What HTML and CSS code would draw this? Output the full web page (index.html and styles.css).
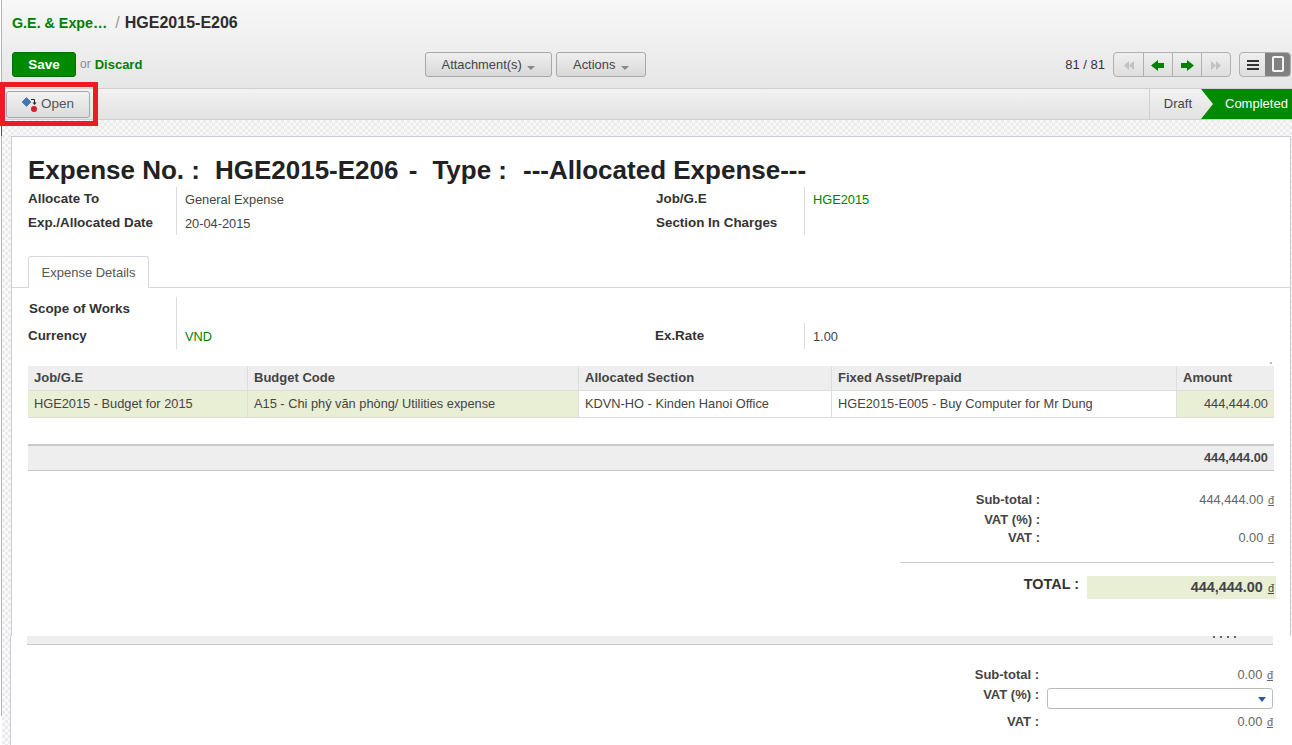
FILE: index.html
```html
<!DOCTYPE html>
<html lang="en">
<head>
  <meta charset="UTF-8">
  <title>HGE2015-E206</title>
  <link rel="stylesheet" href="styles.css">
</head>
<body>
  <div class="app">
    <header class="cp">
      <div class="crumbs">
        <a class="crumb-link">G.E. &amp; Expe…</a>
        <span class="crumb-sep">/</span>
        <span class="crumb-now">HGE2015-E206</span>
      </div>
      <div class="cp-row">
        <div class="cp-left">
          <button class="btn-save">Save</button>
          <span class="or">or</span>
          <a class="discard">Discard</a>
        </div>
        <div class="cp-mid">
          <button class="btn btn-attach">Attachment(s) <i class="caret"></i></button>
          <button class="btn btn-actions">Actions <i class="caret"></i></button>
        </div>
        <div class="cp-right">
          <span class="pager">81 / 81</span>
          <div class="group">
            <button class="seg seg-nav"><svg width="14" height="11" viewBox="0 0 14 11"><path fill="#c2c2c2" d="M7 1v9L2 5.500zM12 1v9L7 5.500z"/></svg></button>
            <button class="seg seg-nav"><svg width="14" height="11" viewBox="0 0 14 11"><path fill="#008000" d="M7 0v3h6v5H7v3L0 5.500z"/></svg></button>
            <button class="seg seg-nav"><svg width="14" height="11" viewBox="0 0 14 11"><path fill="#008000" d="M7 0v3H1v5h6v3l7-5.500z"/></svg></button>
            <button class="seg seg-nav"><svg width="14" height="11" viewBox="0 0 14 11"><path fill="#c2c2c2" d="M2 1v9l5-4.500zM7 1v9l5-4.500z"/></svg></button>
          </div>
          <div class="group group-view">
            <button class="seg seg-view"><svg class="icon-list" width="12" height="10" viewBox="0 0 12 10"><path fill="#333" d="M0 0h12v2H0zM0 4h12v2H0zM0 8h12v2H0z"/></svg></button>
            <button class="seg seg-view seg-on"><svg width="12" height="16" viewBox="0 0 12 16"><rect x="1" y="1" width="10" height="14" rx="1" fill="none" stroke="#f4f4f4" stroke-width="2"/></svg></button>
          </div>
        </div>
      </div>
    </header>

    <div class="statusbar">
      <button class="btn-open">
        <svg width="16" height="16" viewBox="0 0 16 16"><path fill="#3f78b5" stroke="#2c5688" stroke-width=".5" d="M4.500 .5L9 5 4.500 9.500 0 5z"/><path fill="none" stroke="#222" d="M9 2.500h3.500V6"/><path fill="#222" d="M10.500 5.500h4L12.500 8z"/><circle cx="12" cy="12" r="3" fill="#d0202a"/></svg>
        Open
      </button>
      <div class="steps">
        <span class="step">Draft</span>
        <span class="step step-on">Completed</span>
      </div>
    </div>

    <main class="view">
      <section class="sheet">
        <h1 class="title"><span>Expense No. :</span><span>HGE2015-E206 -</span><span>Type :</span><span>---Allocated Expense---</span></h1>
        <div class="fields">
          <div class="field"><b>Allocate To</b><span>General Expense</span></div>
          <div class="field"><b>Job/G.E</b><a>HGE2015</a></div>
          <div class="field"><b>Exp./Allocated Date</b><span>20-04-2015</span></div>
          <div class="field"><b>Section In Charges</b><span></span></div>
        </div>

        <div class="tabs"><span class="tab">Expense Details</span></div>

        <div class="fields fields-tab">
          <div class="field field-scope"><b>Scope of Works</b><span></span></div>
          <div></div>
          <div class="field"><b>Currency</b><a>VND</a></div>
          <div class="field field-rate"><b>Ex.Rate</b><span>1.00</span></div>
        </div>

        <div class="dot"></div>
        <table class="lines">
          <thead>
            <tr><th class="c1">Job/G.E</th><th class="c2">Budget Code</th><th class="c3">Allocated Section</th><th class="c4">Fixed Asset/Prepaid</th><th>Amount</th></tr>
          </thead>
          <tbody>
            <tr>
              <td class="hl">HGE2015 - Budget for 2015</td>
              <td class="hl">A15 - Chi phý văn phòng/ Utilities expense</td>
              <td>KDVN-HO - Kinden Hanoi Office</td>
              <td>HGE2015-E005 - Buy Computer for Mr Dung</td>
              <td class="hl num">444,444.00</td>
            </tr>
          </tbody>
        </table>
        <div class="sumbar">444,444.00</div>

        <div class="totals">
          <div class="t-row"><b>Sub-total :</b><span>444,444.00 <u>đ</u></span></div>
          <div class="t-row t-vatp"><b>VAT (%) :</b><span></span></div>
          <div class="t-row t-vat"><b>VAT :</b><span>0.00 <u>đ</u></span></div>
        </div>
        <div class="grand">
          <b class="grand-label">TOTAL :</b>
          <span class="grand-value">444,444.00 <u>đ</u></span>
        </div>
      </section>

      <section class="sheet2">
        <div class="cutbar"><i class="cut-dots"></i></div>
        <div class="totals totals2">
          <div class="t-row"><b>Sub-total :</b><span>0.00 <u>đ</u></span></div>
          <div class="t-row t-select"><b>VAT (%) :</b><div class="select"><i class="select-arrow"></i></div></div>
          <div class="t-row"><b>VAT :</b><span>0.00 <u>đ</u></span></div>
        </div>
      </section>
    </main>
  </div>
  <div class="edge"></div>
  <div class="redbox"></div>
</body>
</html>
```

FILE: styles.css
```css
html, body {
  margin: 0;
  padding: 0;
  height: 100%;
  overflow: hidden;
  background: #fff;
  font-family: "Liberation Sans", Arial, sans-serif;
  font-size: 12.800px;
  color: #333;
}
.app {
  height: 745px;
  padding-left: 2px;
  display: flex;
  flex-direction: column;
}
a { color: #008000; }

/* control panel */
.cp {
  height: 89px;
  box-sizing: border-box;
  padding: 0 0 0 10px;
  background: linear-gradient(#f8f8f8, #e6e6e6);
  border-bottom: 1px solid #cfcfcf;
  flex: none;
}
.crumbs {
  height: 46px;
  display: flex;
  align-items: center;
  white-space: nowrap;
}
.crumb-link {
  font-size: 14.300px;
  font-weight: bold;
}
.crumb-sep {
  font-size: 16px;
  color: #999;
  margin: 0 5px 0 8px;
}
.crumb-now {
  font-size: 16px;
  font-weight: bold;
  color: #2c2c2c;
}
.cp-row {
  height: 36px;
  display: flex;
  align-items: center;
}
.cp-left {
  width: 413px;
  display: flex;
  align-items: center;
}
.btn-save {
  width: 64px;
  height: 25px;
  padding: 0;
  background: #008a00;
  border: 1px solid #006b00;
  border-radius: 3px;
  color: #fff;
  font: bold 13.500px "Liberation Sans", sans-serif;
}
.or {
  font-size: 12px;
  color: #8a8a8a;
  margin: 0 4px;
}
.discard {
  font-size: 13px;
  font-weight: bold;
}
.cp-mid {
  display: flex;
  gap: 4px;
}
.btn {
  height: 25px;
  padding: 1px 0 0;
  background: linear-gradient(#efefef, #d8d8d8);
  border: 1px solid #a8a8a8;
  border-radius: 3px;
  color: #444;
  font: 12.900px "Liberation Sans", sans-serif;
}
.btn-attach { width: 127px; }
.btn-actions { width: 90px; }
.caret {
  display: inline-block;
  width: 0;
  height: 0;
  margin-left: 2px;
  vertical-align: -1px;
  border: 4px solid transparent;
  border-top-color: #888;
  border-bottom-width: 0;
}
.cp-right {
  margin-left: auto;
  display: flex;
  align-items: center;
}
.pager {
  font-size: 13px;
  color: #333;
  margin-right: 8px;
}
.group {
  display: flex;
  height: 25px;
  box-sizing: border-box;
  background: linear-gradient(#efefef, #dedede);
  border: 1px solid #b0b0b0;
  border-radius: 4px;
  overflow: hidden;
}
.group-view {
  margin: 0 1px 0 8px;
}
.seg {
  padding: 0;
  border: 0;
  background: transparent;
  display: flex;
  align-items: center;
  justify-content: center;
}
.seg-nav { width: 29px; }
.seg-nav + .seg-nav { border-left: 1px solid #b0b0b0; }
.seg-nav svg { margin-top: 3px; }
.seg-view { width: 25px; }
.icon-list { margin-top: 1px; }
.seg-on { background: #808080; }

/* status bar */
.statusbar {
  height: 31px;
  box-sizing: border-box;
  flex: none;
  display: flex;
  align-items: center;
  justify-content: space-between;
  padding-left: 4px;
  background: linear-gradient(#f2f2f2, #e2e2e2);
  border-bottom: 1px solid #cfcfcf;
}
.btn-open {
  width: 84px;
  height: 27px;
  padding: 0 0 2px 15px;
  display: flex;
  align-items: center;
  gap: 3px;
  background: linear-gradient(#f2f2f2, #dcdcdc);
  border: 1px solid #a8a8a8;
  border-radius: 3px;
  color: #555;
  font: 13.500px "Liberation Sans", sans-serif;
}
.btn-open svg { margin-top: 4px; }
.steps {
  display: flex;
  align-self: stretch;
}
.step {
  display: flex;
  align-items: center;
  padding: 0 9px 2px 14px;
  border-left: 1px solid #cfcfcf;
  color: #444;
  font-size: 13px;
}
.step-on {
  width: 91px;
  box-sizing: border-box;
  padding: 0 0 2px 24px;
  border-left: 0;
  background: #008a00;
  color: #fff;
  white-space: nowrap;
  clip-path: polygon(0 0, 100% 0, 100% 100%, 0 100%, 12px 50%);
}

/* sheet */
.view {
  flex: 1;
  min-height: 0;
  background: repeating-conic-gradient(#ececec 0 25%, #f9f9f9 0 50%) 0 0 / 6px 6px;
  padding-top: 16px;
}
.sheet {
  height: 500px;
  box-sizing: border-box;
  margin: 0 1px 0 9px;
  padding: 0 16px;
  background: #fff;
  border: 1px solid #cdcbd6;
  border-bottom: 0;
}
.title {
  margin: 0;
  padding-top: 16px;
  height: 34px;
  display: flex;
  align-items: center;
  font-size: 26px;
  line-height: 32px;
  color: #222;
  white-space: nowrap;
}
.title span:nth-child(1) { margin-right: 15px; }
.title span:nth-child(2) { margin-right: 15px; word-spacing: 3px; }
.title span:nth-child(3) { margin-right: 16px; }
.fields {
  display: grid;
  grid-template-columns: 628px 1fr;
  grid-auto-rows: 24px;
}
.field {
  display: grid;
  grid-template-columns: 148px 1fr;
  align-items: center;
}
.field b {
  font-size: 13.400px;
  padding-bottom: 2px;
  color: #333;
}
.field > span, .field > a {
  align-self: stretch;
  display: flex;
  align-items: center;
  padding-left: 8px;
  padding-top: 1px;
  border-left: 1px solid #dcdcdc;
  color: #444;
}
.field > a { color: #008000; }
.tabs {
  margin: 21px -16px 0;
  padding-left: 16px;
  height: 32px;
  box-sizing: border-box;
  border-bottom: 1px solid #d8d8d8;
}
.tab {
  display: inline-block;
  width: 121px;
  height: 32px;
  box-sizing: border-box;
  padding-top: 8px;
  text-align: center;
  font-size: 13px;
  background: #fff;
  border: 1px solid #d8d8d8;
  border-bottom: 0;
  border-radius: 3px 3px 0 0;
  color: #555;
}
.fields-tab {
  padding-top: 9px;
  grid-auto-rows: 26px;
}
.field-scope b {
  padding: 0 0 4px 1px;
}
.field-rate b {
  margin-left: -1px;
}
.dot {
  width: 2px;
  height: 2px;
  margin: 13px 2px 0 auto;
  background: #bbb;
}
.lines {
  width: 100%;
  margin-top: 2px;
  border-collapse: collapse;
  table-layout: fixed;
}
.lines th {
  height: 22px;
  padding: 0 6px 2px;
  text-align: left;
  font-size: 13px;
  background: #eee;
  border-left: 1px solid #ddd;
  border-bottom: 1px solid #ddd;
  color: #444;
}
.lines td {
  height: 24px;
  padding: 0 6px 2px;
  border-left: 1px solid #ddd;
  border-bottom: 1px solid #ddd;
  color: #444;
  white-space: nowrap;
}
.lines th:first-child, .lines td:first-child { border-left: 0; }
.c1 { width: 207px; }
.c2 { width: 318px; }
.c3 { width: 240px; }
.c4 { width: 332px; }
.hl { background: #e9efd5; }
.num { text-align: right; }
.sumbar {
  margin-top: 26px;
  height: 27px;
  box-sizing: border-box;
  padding-right: 6px;
  text-align: right;
  line-height: 23px;
  font-weight: bold;
  background: #eee;
  border-top: 2px solid #c8c8c8;
  border-bottom: 1px solid #c8c8c8;
  color: #444;
}
.totals {
  margin-top: 19px;
}
.t-row {
  display: grid;
  grid-template-columns: 1012px 1fr;
  align-items: center;
  height: 19px;
  color: #666;
}
.t-row b {
  text-align: right;
  font-size: 13px;
  color: #444;
}
.t-row span {
  text-align: right;
}
.t-vatp b { padding-top: 2px; }
u { margin-left: 1px; font-size: 11px; font-weight: normal; }
.grand {
  margin: 15px 0 0 872px;
  padding-top: 13px;
  border-top: 1px solid #ccc;
  display: grid;
  grid-template-columns: 179px 1fr;
  column-gap: 8px;
}
.grand-label {
  padding-bottom: 1px;
  text-align: right;
  font-size: 14.400px;
  color: #333;
}
.grand-value {
  height: 23px;
  line-height: 23px;
  margin-right: -2px;
  padding-right: 2px;
  box-sizing: border-box;
  text-align: right;
  font-size: 14.400px;
  font-weight: bold;
  background: #e9efd5;
  color: #444;
}

/* second sheet piece, a pixel further left */
.sheet2 {
  height: 110px;
  box-sizing: border-box;
  margin-left: 8px;
  padding: 0 19px 0 16px;
  background: #fff;
  border-left: 1px solid #cdcbd6;
}
.cutbar {
  height: 9px;
  box-sizing: border-box;
  display: flex;
  justify-content: flex-end;
  padding-right: 36px;
  background: #eee;
  border-bottom: 1px solid #c8c8c8;
}
.cut-dots {
  width: 24px;
  height: 2px;
  background: repeating-linear-gradient(90deg, #666 0 2px, transparent 2px 7px);
}
.totals2 {
  margin-top: 20px;
}
.t-select { height: 28px; }
.t-select b { padding-bottom: 7px; }
.select {
  position: relative;
  height: 21px;
  box-sizing: border-box;
  margin-left: 8px;
  background: #fff;
  border: 1px solid #bbb;
  border-radius: 3px;
}
.select-arrow {
  position: absolute;
  right: 6px;
  top: 8px;
  border: 4px solid transparent;
  border-top: 5px solid #2e5a9c;
  border-bottom: 0;
}

/* window edge and the annotation over the screenshot */
.edge {
  position: absolute;
  left: 1px;
  top: 0;
  width: 1px;
  height: 716px;
  background: linear-gradient(#b5b5b5 126px, #008a00 126px 136px, #b5b5b5 136px);
}
.redbox {
  position: absolute;
  left: 0;
  top: 82px;
  width: 88px;
  height: 34px;
  border: 5px solid #ed1c24;
}
```
